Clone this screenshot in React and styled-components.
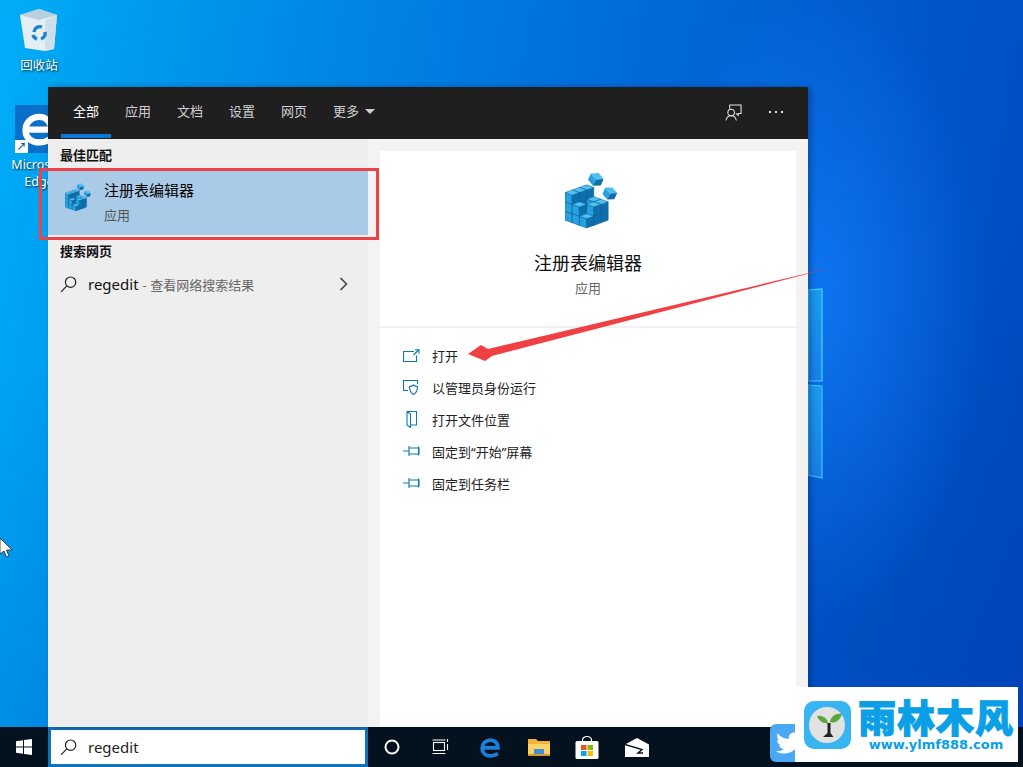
import React from 'react'
import styled, { createGlobalStyle } from 'styled-components'
import { FaTwitter } from 'react-icons/fa'

const Global = createGlobalStyle`
    html, body { margin: 0; padding: 0; overflow: hidden; }
    body { font-family: "Noto Sans", "Noto Sans CJK SC", sans-serif; }
    * { box-sizing: border-box; }
`

const Desktop = styled.div`
    position: relative;
    width: 1023px;
    height: 767px;
    overflow: hidden;
    display: flex;
    flex-direction: column;
    background:
        radial-gradient(ellipse 170px 320px at 815px 300px, rgba(20,130,255,0.7), rgba(20,130,255,0) 100%),
        linear-gradient(172deg, rgba(0,40,150,0) 40%, rgba(0,40,150,0.18) 100%),
        linear-gradient(100deg, #00aef8 0%, #0098ee 14%, #0070dc 50%, #0054ca 82%, #0048be 100%);
`

const Wallpaper = styled.svg`
    position: absolute;
    left: 808px;
    top: 285px;
`

const DesktopIcon = styled.div`
    position: absolute;
    left: ${({ $left }) => $left}px;
    top: ${({ $top }) => $top}px;
    width: 68px;
    display: flex;
    flex-direction: column;
    align-items: center;
`

const IconLabel = styled.div`
    margin-top: ${({ $gap }) => $gap}px;
    color: #fff;
    font-size: 12.5px;
    line-height: 17px;
    text-align: center;
    white-space: nowrap;
    text-shadow: 1px 1px 2px rgba(0,0,0,0.8);
`

const EdgeTile = styled.div`
    position: relative;
    width: 48px;
    height: 48px;
    background: #0a6fc9;
    display: flex;
    align-items: center;
    justify-content: center;
`

const ShortcutBadge = styled.div`
    position: absolute;
    left: 0;
    bottom: 0;
    width: 13px;
    height: 13px;
    background: #fff;
    color: #0b5fb0;
    font-size: 10px;
    line-height: 13px;
    text-align: center;
    font-weight: 700;
`

const Main = styled.div`
    position: relative;
    flex: 1;
    min-height: 0;
    display: flex;
    padding: 87px 0 0 48px;
`

const Window = styled.div`
    width: 760px;
    display: flex;
    flex-direction: column;
    background: #f3f3f3;
    box-shadow: 3px 0 6px rgba(0,20,70,0.35);
`

const TopBar = styled.div`
    height: 52px;
    flex: none;
    background: #1f1f1f;
    display: flex;
    align-items: stretch;
    padding-left: 13px;
`

const Tab = styled.div`
    width: 52px;
    padding: 0 0 5px 12px;
    display: flex;
    align-items: center;
    gap: 6px;
    white-space: nowrap;
    font-size: 13px;
    color: ${({ $active }) => ($active ? '#ffffff' : '#d0d0d0')};
    position: relative;
    &::after {
        content: '';
        display: ${({ $active }) => ($active ? 'block' : 'none')};
        position: absolute;
        left: 0;
        bottom: 1px;
        width: 50px;
        height: 4px;
        background: #0a78d4;
    }
`

const Caret = styled.span`
    width: 0;
    height: 0;
    border-left: 5px solid transparent;
    border-right: 5px solid transparent;
    border-top: 5px solid #d0d0d0;
    margin-top: 2px;
`

const TopActions = styled.div`
    margin-left: auto;
    display: flex;
    align-items: center;
    gap: 27px;
    padding: 0 25px 2px 0;
    color: #e6e6e6;
`

const Dots = styled.div`
    display: flex;
    gap: 4px;
    span {
        width: 2px;
        height: 2px;
        background: #e6e6e6;
    }
`

const Body = styled.div`
    flex: 1;
    min-height: 0;
    display: flex;
`

const LeftPane = styled.div`
    width: 320px;
    background: #eeeeee;
    display: flex;
    flex-direction: column;
`

const SectionTitle = styled.div`
    height: 32px;
    padding: 0 0 2px 12px;
    display: flex;
    align-items: center;
    font-size: 13px;
    font-weight: 700;
    color: #111;
`

const BestMatch = styled.div`
    height: 64px;
    background: #a9cbe8;
    display: flex;
    align-items: center;
    padding: 0 0 2px 17px;
    gap: 12px;
`

const BestIcon = styled.div`
    display: flex;
    margin-bottom: 10px;
`

const BestText = styled.div`
    display: flex;
    flex-direction: column;
    gap: 5px;
`

const BestName = styled.div`
    font-size: 15px;
    line-height: 21px;
    color: #000;
`

const BestKind = styled.div`
    font-size: 13px;
    line-height: 18px;
    color: #555;
`

const WebRow = styled.div`
    height: 36px;
    padding: 0 20px 0 12px;
    margin-top: -1px;
    display: flex;
    align-items: center;
    color: #111;
`

const WebQuery = styled.span`
    margin-left: 11px;
    font-size: 15px;
`

const WebHint = styled.span`
    margin-left: 4px;
    font-size: 13px;
    color: #666;
`

const Chevron = styled.svg`
    margin-left: auto;
`

const RightPane = styled.div`
    flex: 1;
    min-width: 0;
    padding: 12px 12px 0;
    display: flex;
`

const Card = styled.div`
    flex: 1;
    background: #fff;
    display: flex;
    flex-direction: column;
`

const Hero = styled.div`
    height: 177px;
    flex: none;
    padding-top: 21px;
    border-bottom: 2px solid #f1f1f1;
    display: flex;
    flex-direction: column;
    align-items: center;
`

const HeroIcon = styled.div`
    display: flex;
    margin-left: 8px;
`

const HeroName = styled.div`
    margin-top: 20px;
    font-size: 18px;
    line-height: 26px;
    color: #111;
`

const HeroKind = styled.div`
    margin-top: 3px;
    font-size: 13px;
    line-height: 18px;
    color: #666;
`

const ActionList = styled.div`
    padding: 11px 0 0 23px;
    display: flex;
    flex-direction: column;
`

const Action = styled.div`
    height: 32px;
    display: flex;
    align-items: center;
    gap: 12px;
    font-size: 13px;
    color: #222;
`

const GlyphSlot = styled.span`
    width: 17px;
    display: flex;
    justify-content: center;
`

const Taskbar = styled.div`
    height: 40px;
    flex: none;
    background: #04111f;
    display: flex;
    align-items: center;
`

const StartButton = styled.div`
    width: 48px;
    height: 40px;
    display: flex;
    align-items: center;
    justify-content: center;
`

const SearchBox = styled.div`
    width: 320px;
    height: 40px;
    background: #fff;
    border: 3px solid #1272b8;
    padding-left: 9px;
    display: flex;
    align-items: center;
    gap: 11px;
    font-size: 15px;
    color: #222;
`

const TaskSlot = styled.div`
    width: ${({ $w }) => $w}px;
    height: 40px;
    display: flex;
    align-items: center;
    justify-content: center;
`

const TwitterTile = styled.div`
    position: absolute;
    left: 770px;
    top: 724px;
    width: 40px;
    height: 38px;
    border-radius: 6px;
    background: #4aa8f5;
    color: #fff;
    font-size: 26px;
    display: flex;
    align-items: center;
    padding-left: 6px;
`

const HighlightBox = styled.div`
    position: absolute;
    left: 39px;
    top: 168px;
    width: 340px;
    height: 72px;
    border: 3px solid #ee4346;
`

const Annotation = styled.svg`
    position: absolute;
    left: 0;
    top: 0;
    pointer-events: none;
`

const Watermark = styled.div`
    position: absolute;
    left: 795px;
    top: 687px;
    width: 223px;
    height: 75px;
    background: #fff;
    display: flex;
    align-items: center;
    padding-left: 9px;
    gap: 7px;
`

const WatermarkText = styled.div`
    display: flex;
    flex-direction: column;
    align-items: center;
    color: #0a9fe6;
`

const WatermarkName = styled.div`
    font-size: 38px;
    line-height: 40px;
    font-weight: 900;
    letter-spacing: 1px;
    white-space: nowrap;
    -webkit-text-stroke: 1px #0a9fe6;
`

const WatermarkUrl = styled.div`
    font-family: "DejaVu Sans", sans-serif;
    font-size: 13px;
    line-height: 15px;
    font-weight: 700;
    white-space: nowrap;
`

const Pointer = styled.svg`
    position: absolute;
    left: 0;
    top: 538px;
`

// height of each stack of cubes, [i][j]; (0,0) is the corner nearest the viewer
const STACKS = [[1, 2, 3], [2, 1, 3], [2, 2, 3]]

function iso(i, j, k) {
    return `${21.6 + (i - j) * 7.2},${56 - (i + j) * 2.6 - k * 9.2}`
}

function RegistryIcon({ size }) {
    const faces = []
    for (let i = 2; i >= 0; i--) {
        for (let j = 2; j >= 0; j--) {
            for (let k = 0; k < STACKS[i][j]; k++) {
                const key = `${i}-${j}-${k}`
                faces.push(
                    <g key={key} stroke="#0c5f96" strokeWidth="0.5">
                        <polygon fill="#26a2e0" points={[iso(i, j, k), iso(i, j + 1, k), iso(i, j + 1, k + 1), iso(i, j, k + 1)].join(' ')} />
                        <polygon fill="#0f6fad" points={[iso(i, j, k), iso(i + 1, j, k), iso(i + 1, j, k + 1), iso(i, j, k + 1)].join(' ')} />
                        <polygon fill="#4cc2f2" points={[iso(i, j, k + 1), iso(i + 1, j, k + 1), iso(i + 1, j + 1, k + 1), iso(i, j + 1, k + 1)].join(' ')} />
                    </g>
                )
            }
        }
    }
    return (
        <svg width={size} height={size * 58 / 54} viewBox="0 0 54 58">
            {faces}
            <g transform="translate(31 7) rotate(24)">
                <polygon fill="#4cc2f2" points="-7,-3 0,-6.5 7,-3 0,0.5" />
                <polygon fill="#26a2e0" points="-7,-3 0,0.5 0,7.5 -7,4" />
                <polygon fill="#0f6fad" points="7,-3 0,0.5 0,7.5 7,4" />
            </g>
            <g transform="translate(45 21) rotate(24)">
                <polygon fill="#4cc2f2" points="-6.5,-3 0,-6 6.5,-3 0,0.5" />
                <polygon fill="#26a2e0" points="-6.5,-3 0,0.5 0,7 -6.5,4" />
                <polygon fill="#0f6fad" points="6.5,-3 0,0.5 0,7 6.5,4" />
            </g>
        </svg>
    )
}

function RecycleBin() {
    return (
        <svg width="40" height="44" viewBox="0 0 40 44">
            <polygon fill="#e3eef5" points="1,7 20,1 38,7 35,41 26,43 6,40" />
            <polygon fill="#b9cfdd" points="1,7 20,1 38,7 20,12" />
            <polygon fill="#cddfe9" points="26,12 38,7 35,41 26,43" />
            <path d="M15 24a6 6 0 0 1 8-5M26 24a6 6 0 0 1-4 7M18 31a6 6 0 0 1-4-4" fill="none" stroke="#1c80d0" strokeWidth="3.4" />
        </svg>
    )
}

// the old Edge "e": a heavy ring with a crossbar and an open lower right
function EdgeGlyph({ size, color }) {
    return (
        <svg width={size} height={size} viewBox="0 0 24 24" fill="none" stroke={color} strokeWidth="4.4">
            <path d="M4 12.500H20.500C20.500 7 17 3.500 12 3.500 6.500 3.500 2.500 7.500 2.500 13 2.500 18 6.500 21.500 12 21.500 15 21.500 18 20.500 20.500 19" />
        </svg>
    )
}

function SearchGlyph({ color = '#222' }) {
    return (
        <svg width="17" height="17" viewBox="0 0 17 17" fill="none" stroke={color} strokeWidth="1.2">
            <circle cx="10.6" cy="6.2" r="5.2" />
            <path d="M6.8 9.8 1 15.8" />
        </svg>
    )
}

const actionStroke = { fill: 'none', stroke: '#0f76b4', strokeWidth: 1.1 }

function OpenGlyph() {
    return (
        <svg width="17" height="13" viewBox="0 0 17 13" {...actionStroke}>
            <path d="M11 2.500H.5v10h13V6.500" />
            <path d="M10.500 6 15.500 1M12 .8h4v4" />
        </svg>
    )
}

function AdminGlyph() {
    return (
        <svg width="17" height="15" viewBox="0 0 17 15" {...actionStroke}>
            <path d="M5 10.500H.5V.5h14V4" />
            <path d="M6.500 6.500c2 0 3-.5 4-1.500 1 1 2 1.500 4 1.500 0 4-1.500 6.500-4 8-2.500-1.500-4-4-4-8z" />
        </svg>
    )
}

function LocationGlyph() {
    return (
        <svg width="11" height="17" viewBox="0 0 11 17" {...actionStroke}>
            <path d="M1 .5h9.500v13.500H4.500M1 .5v13.500l3.500 2.500V3L1 .5z" />
        </svg>
    )
}

function PinGlyph() {
    return (
        <svg width="17" height="12" viewBox="0 0 17 12" {...actionStroke}>
            <path d="M0 6h6M6 1v10M6 3h10v6H6M15.500 1.500v9" />
        </svg>
    )
}

function WindowsGlyph() {
    return (
        <svg width="16" height="16" viewBox="0 0 16 16" fill="#fff">
            <polygon points="0,2.200 7,1.200 7,7.500 0,7.500" />
            <polygon points="8,1 16,0 16,7.500 8,7.500" />
            <polygon points="0,8.500 7,8.500 7,14.800 0,13.800" />
            <polygon points="8,8.500 16,8.500 16,16 8,15" />
        </svg>
    )
}

function TaskViewGlyph() {
    return (
        <svg width="17" height="16" viewBox="0 0 17 16" fill="none" stroke="#fff" strokeWidth="1.1">
            <rect x="1.500" y="3.500" width="11" height="8" />
            <path d="M.5 1h13M.5 14.500h13M15.500 0v3M15.500 5v6" />
        </svg>
    )
}

function FolderGlyph() {
    return (
        <svg width="22" height="19" viewBox="0 0 22 19">
            <path d="M0 1h8l2 2h12v15H0z" fill="#f2b33d" />
            <rect x="0" y="6" width="22" height="12" fill="#fbd268" />
            <rect x="6" y="11" width="10" height="5" fill="#3f90d6" />
            <rect x="0" y="16" width="22" height="2" fill="#d89a2c" />
        </svg>
    )
}

function StoreGlyph() {
    return (
        <svg width="24" height="23" viewBox="0 0 24 23">
            <path d="M7.500 6V4a4.500 3.500 0 0 1 9 0v2" fill="none" stroke="#fff" strokeWidth="1.200" />
            <rect x="0.500" y="5" width="23" height="18" rx="1.500" fill="#fff" />
            <rect x="6" y="9" width="5.500" height="5" fill="#f25022" />
            <rect x="12.500" y="9" width="5.500" height="5" fill="#7fba00" />
            <rect x="6" y="15" width="5.500" height="5" fill="#00a4ef" />
            <rect x="12.500" y="15" width="5.500" height="5" fill="#ffb900" />
        </svg>
    )
}

function MailGlyph() {
    return (
        <svg width="24" height="19" viewBox="0 0 24 19">
            <polygon points="0,6.500 12,0 24,6.500 24,19 0,19" fill="#fff" />
            <path d="M0 6.500 17 11.500 13 15 18 15" fill="none" stroke="#04111f" strokeWidth="1.400" />
        </svg>
    )
}

function WatermarkLogo() {
    return (
        <svg width="47" height="48" viewBox="0 0 47 48">
            <rect width="47" height="48" rx="10" fill="#38b4f0" />
            <circle cx="23" cy="24" r="18" fill="#e2e2e2" />
            <path d="M24 22c-1-6-7-8-11-7 2 5 6 8 11 7zM26 21c1-6 6-9 12-8-2 6-6 10-12 8z" fill="#5aa83a" />
            <path d="M23.500 22h3v10l3 4H19l4.500-4z" fill="#222" />
        </svg>
    )
}

const tabs = ['全部', '应用', '文档', '设置', '网页']
const actions = [
    [<OpenGlyph key="g" />, '打开'],
    [<AdminGlyph key="g" />, '以管理员身份运行'],
    [<LocationGlyph key="g" />, '打开文件位置'],
    [<PinGlyph key="g" />, '固定到“开始”屏幕'],
    [<PinGlyph key="g" />, '固定到任务栏'],
]

export default function App() {
    return (
        <Desktop>
            <Global />
            <Wallpaper width="16" height="196" viewBox="0 0 16 196">
                <defs>
                    <linearGradient id="pane" x1="0" x2="0" y1="0" y2="1">
                        <stop offset="0" stopColor="#1a9cf0" />
                        <stop offset="1" stopColor="#1a7ee8" />
                    </linearGradient>
                </defs>
                <polygon points="0,5 14,4 14,96 0,96" fill="url(#pane)" stroke="#3ed6f6" strokeWidth="1.200" />
                <polygon points="0,100 14,101 14,193 0,190" fill="url(#pane)" stroke="#3ec6f6" strokeWidth="1.200" />
            </Wallpaper>

            <DesktopIcon $left={5} $top={8}>
                <RecycleBin />
                <IconLabel $gap={5}>回收站</IconLabel>
            </DesktopIcon>
            <DesktopIcon $left={5} $top={105}>
                <EdgeTile>
                    <EdgeGlyph size={34} color="#fff" />
                    <ShortcutBadge>↗</ShortcutBadge>
                </EdgeTile>
                <IconLabel $gap={3}>Microsoft<br />Edge</IconLabel>
            </DesktopIcon>

            <Main>
                <Window>
                    <TopBar>
                        {tabs.map((t, i) => <Tab key={t} $active={i === 0}>{t}</Tab>)}
                        <Tab>更多<Caret /></Tab>
                        <TopActions>
                            <svg width="17" height="17" viewBox="0 0 18 18" fill="none" stroke="#e6e6e6" strokeWidth="1.100">
                                <path d="M5 5V1h12v9h-3v2l-2.500-2" />
                                <circle cx="6.500" cy="9" r="3.500" />
                                <path d="M1 17.500c.5-3 2.500-5 5.500-5s5 2 5.500 5" />
                            </svg>
                            <Dots><span /><span /><span /></Dots>
                        </TopActions>
                    </TopBar>
                    <Body>
                        <LeftPane>
                            <SectionTitle>最佳匹配</SectionTitle>
                            <BestMatch>
                                <BestIcon><RegistryIcon size={27} /></BestIcon>
                                <BestText>
                                    <BestName>注册表编辑器</BestName>
                                    <BestKind>应用</BestKind>
                                </BestText>
                            </BestMatch>
                            <SectionTitle>搜索网页</SectionTitle>
                            <WebRow>
                                <SearchGlyph />
                                <WebQuery>regedit</WebQuery>
                                <WebHint>- 查看网络搜索结果</WebHint>
                                <Chevron width="9" height="14" viewBox="0 0 9 14" fill="none" stroke="#444" strokeWidth="1.600">
                                    <path d="M1.500 1 7.500 7 1.500 13" />
                                </Chevron>
                            </WebRow>
                        </LeftPane>
                        <RightPane>
                            <Card>
                                <Hero>
                                    <HeroIcon><RegistryIcon size={54} /></HeroIcon>
                                    <HeroName>注册表编辑器</HeroName>
                                    <HeroKind>应用</HeroKind>
                                </Hero>
                                <ActionList>
                                    {actions.map(([glyph, label]) => (
                                        <Action key={label}>
                                            <GlyphSlot>{glyph}</GlyphSlot>
                                            {label}
                                        </Action>
                                    ))}
                                </ActionList>
                            </Card>
                        </RightPane>
                    </Body>
                </Window>
            </Main>

            <Taskbar>
                <StartButton><WindowsGlyph /></StartButton>
                <SearchBox>
                    <SearchGlyph />
                    regedit
                </SearchBox>
                <TaskSlot $w={48}>
                    <svg width="16" height="16" viewBox="0 0 16 16" fill="none" stroke="#fff" strokeWidth="2">
                        <circle cx="8" cy="8" r="6.500" />
                    </svg>
                </TaskSlot>
                <TaskSlot $w={48}><TaskViewGlyph /></TaskSlot>
                <TaskSlot $w={52}><EdgeGlyph size={21} color="#1680dc" /></TaskSlot>
                <TaskSlot $w={46}><FolderGlyph /></TaskSlot>
                <TaskSlot $w={50}><StoreGlyph /></TaskSlot>
                <TaskSlot $w={50}><MailGlyph /></TaskSlot>
            </Taskbar>

            <TwitterTile><FaTwitter /></TwitterTile>

            <HighlightBox />
            <Annotation width="1023" height="767" viewBox="0 0 1023 767">
                <polygon fill="#f04044" points="830,268 488,349 481,345 468,354 485,361 492,356" />
            </Annotation>

            <Pointer width="13" height="20" viewBox="0 0 13 20">
                <polygon points="0,0 12,12 6.500,12 9,18 6.500,19 4,13 0,16" fill="#fff" stroke="#222" strokeWidth="0.800" />
            </Pointer>

            <Watermark>
                <WatermarkLogo />
                <WatermarkText>
                    <WatermarkName>雨林木风</WatermarkName>
                    <WatermarkUrl>www.ylmf888.com</WatermarkUrl>
                </WatermarkText>
            </Watermark>
        </Desktop>
    )
}
